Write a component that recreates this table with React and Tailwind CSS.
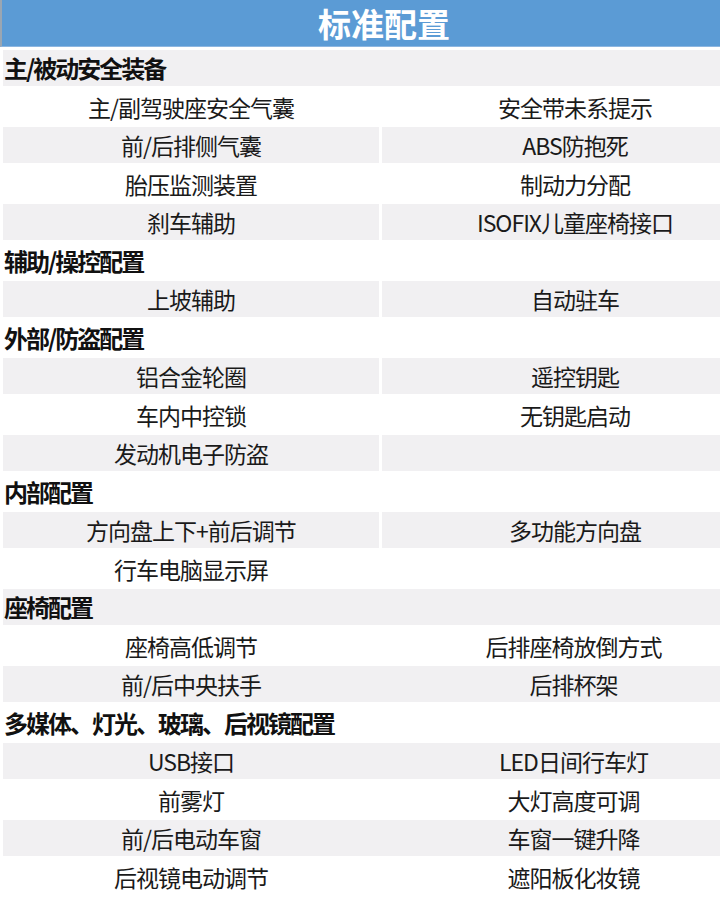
const rows = [
	{ section: '主/被动安全装备' },
	{ left: '主/副驾驶座安全气囊', right: '安全带未系提示' },
	{ left: '前/后排侧气囊', right: 'ABS防抱死' },
	{ left: '胎压监测装置', right: '制动力分配' },
	{ left: '刹车辅助', right: 'ISOFIX儿童座椅接口' },
	{ section: '辅助/操控配置' },
	{ left: '上坡辅助', right: '自动驻车' },
	{ section: '外部/防盗配置' },
	{ left: '铝合金轮圈', right: '遥控钥匙' },
	{ left: '车内中控锁', right: '无钥匙启动' },
	{ left: '发动机电子防盗', right: '' },
	{ section: '内部配置' },
	{ left: '方向盘上下+前后调节', right: '多功能方向盘' },
	{ left: '行车电脑显示屏', right: '' },
	{ section: '座椅配置' },
	{ left: '座椅高低调节', right: '后排座椅放倒方式', solid: true },
	{ left: '前/后中央扶手', right: '后排杯架', solid: true },
	{ section: '多媒体、灯光、玻璃、后视镜配置' },
	{ left: 'USB接口', right: 'LED日间行车灯', solid: true },
	{ left: '前雾灯', right: '大灯高度可调', solid: true },
	{ left: '前/后电动车窗', right: '车窗一键升降', solid: true },
	{ left: '后视镜电动调节', right: '遮阳板化妆镜', solid: true },
]

const font = { fontFamily: '"Noto Sans CJK SC", "Noto Sans", sans-serif' }

const Row = ({ row, shaded }) => {
	const bg = shaded ? 'bg-[#f1f0f2]' : 'bg-white'

	if (row.section) {
		return (
			<div className={`h-[36px] flex items-center pl-[1px] ${bg}`}>
				<span className="text-[24px] font-bold leading-[36px] text-[#111] tracking-[-2px]">{row.section}</span>
			</div>
		)
	}

	// the right column runs past the picture's edge, so its text sits right of the visible middle
	return (
		<div className={`h-[36px] flex ${row.solid ? 'gap-0' : 'gap-[3px]'}`}>
			<div className={`w-[376px] flex items-center justify-center ${bg}`}>
				<span className="text-[23px] leading-[36px] text-[#1a1a1a] tracking-[-1px]">{row.left}</span>
			</div>
			<div className={`flex-1 flex items-center justify-center pl-[48px] ${bg}`}>
				<span className="text-[23px] leading-[36px] text-[#1a1a1a] tracking-[-1px]">{row.right}</span>
			</div>
		</div>
	)
}

export default function App() {
	return (
		<div className="w-[720px] h-[900px] overflow-hidden bg-white" style={font}>
			<div className="h-[47px] bg-[#5b9bd5] border-b border-[#8db6e0] border-l-2 border-l-[#9aa6b2] flex items-center justify-center pl-[46px]">
				<span className="text-[33px] font-bold text-white leading-[44px]">标准配置</span>
			</div>
			<div className="flex flex-col gap-[2.5px] pl-[3px] pt-[3px]">
				{rows.map((row, i) => (
					<Row key={i} row={row} shaded={i % 2 === 0} />
				))}
			</div>
		</div>
	)
}
